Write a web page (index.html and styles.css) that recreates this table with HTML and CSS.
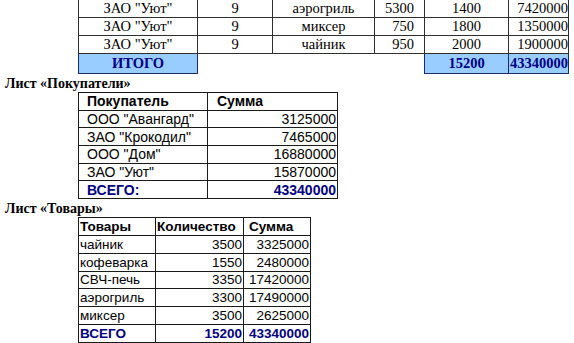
FILE: index.html
```html
<!DOCTYPE html>
<html lang="ru">
<head>
<meta charset="utf-8">
<title>Листы</title>
<link rel="stylesheet" href="styles.css">
</head>
<body>
<table class="orders">
  <colgroup>
    <col class="c1"><col class="c2"><col class="c3"><col class="c4"><col class="c5"><col class="c6">
  </colgroup>
  <tr><td class="ctr">ЗАО "Уют"</td><td class="ctr">9</td><td class="ctr">аэрогриль</td><td class="rgt">5300</td><td class="ctr">1400</td><td class="num">7420000</td></tr>
  <tr><td class="ctr">ЗАО "Уют"</td><td class="ctr">9</td><td class="ctr">миксер</td><td class="rgt">750</td><td class="ctr">1800</td><td class="num">1350000</td></tr>
  <tr><td class="ctr">ЗАО "Уют"</td><td class="ctr">9</td><td class="ctr">чайник</td><td class="rgt">950</td><td class="ctr">2000</td><td class="num">1900000</td></tr>
  <tr class="total"><td class="tot ctr">ИТОГО</td><td class="blank"></td><td class="blank"></td><td class="blank"></td><td class="tot ctr">15200</td><td class="tot num">43340000</td></tr>
</table>

<div class="sheet-title">Лист «Покупатели»</div>
<table class="buyers">
  <colgroup><col class="b1"><col class="b2"></colgroup>
  <tr class="head"><td>Покупатель</td><td>Сумма</td></tr>
  <tr><td>ООО "Авангард"</td><td class="num">3125000</td></tr>
  <tr><td>ЗАО "Крокодил"</td><td class="num">7465000</td></tr>
  <tr><td>ООО "Дом"</td><td class="num">16880000</td></tr>
  <tr><td>ЗАО "Уют"</td><td class="num">15870000</td></tr>
  <tr class="sum"><td>ВСЕГО:</td><td class="num">43340000</td></tr>
</table>

<div class="sheet-title">Лист «Товары»</div>
<table class="goods">
  <colgroup><col class="g1"><col class="g2"><col class="g3"></colgroup>
  <tr class="head"><td>Товары</td><td>Количество</td><td class="pad">Сумма</td></tr>
  <tr><td>чайник</td><td class="num">3500</td><td class="num">3325000</td></tr>
  <tr><td>кофеварка</td><td class="num">1550</td><td class="num">2480000</td></tr>
  <tr><td>СВЧ-печь</td><td class="num">3350</td><td class="num">17420000</td></tr>
  <tr><td>аэрогриль</td><td class="num">3300</td><td class="num">17490000</td></tr>
  <tr><td>миксер</td><td class="num">3500</td><td class="num">2625000</td></tr>
  <tr class="sum"><td>ВСЕГО</td><td class="num">15200</td><td class="num">43340000</td></tr>
</table>
</body>
</html>
```

FILE: styles.css
```css
html, body {
  margin: 0;
  padding: 0;
  background: #ffffff;
  color: #000000;
}

body {
  overflow: hidden;
}

table {
  border-collapse: collapse;
  table-layout: fixed;
  margin-left: 78px;
}

td {
  padding: 0;
  white-space: nowrap;
  overflow: visible;
}

/* top sheet (Times) */
.orders {
  font-family: "Liberation Serif", "Times New Roman", serif;
  font-size: 14.5px;
  width: 490px;
  margin-top: -1px;
}
.orders .c1 { width: 119px; }
.orders .c2 { width: 75px; }
.orders .c3 { width: 102px; }
.orders .c4 { width: 50px; }
.orders .c5 { width: 84px; }
.orders .c6 { width: 60px; }

.orders tr { height: 17.7px; }
.orders td {
  border: 1px solid #2e2e2e;
  vertical-align: middle;
}
.orders .ctr { text-align: center; }
.orders .rgt { text-align: right; padding-right: 10px; }
.orders .num { text-align: right; padding-right: 0; }

.orders tr.total { height: 20px; }
.orders .tot {
  background: #99ccff;
  color: #000080;
  font-weight: bold;
  border: 1px solid #1d2a66;
}
.orders .blank {
  border-left: none;
  border-right: none;
  border-bottom: none;
}

.sheet-title {
  font-family: "Liberation Serif", "Times New Roman", serif;
  font-weight: bold;
  font-size: 14px;
  line-height: 16px;
  height: 16px;
  padding-top: 2px;
  padding-left: 5px;
  white-space: nowrap;
}

/* Arial sheets */
.buyers, .goods {
  font-family: "Liberation Sans", Arial, sans-serif;
}
.buyers td, .goods td {
  border: 1px solid #1a1a1a;
  vertical-align: middle;
}
.head td { font-weight: bold; }
.sum td { font-weight: bold; color: #000080; }
.buyers .num, .goods .num { text-align: right; padding-right: 1px; }

.buyers {
  font-size: 14px;
  width: 259px;
}
.buyers .b1 { width: 129px; }
.buyers .b2 { width: 130px; }
.buyers tr { height: 17.67px; }
.buyers td:first-child { padding-left: 8px; }
.buyers .head td + td { padding-left: 9px; }

.goods {
  font-size: 13.5px;
  width: 232px;
}
.goods .g1 { width: 77px; }
.goods .g2 { width: 88px; }
.goods .g3 { width: 67px; }
.goods tr { height: 17.86px; }
.goods td:first-child { padding-left: 1px; }
.goods .head td { padding-left: 1px; }
.goods .head td.pad { padding-left: 5px; }
```
